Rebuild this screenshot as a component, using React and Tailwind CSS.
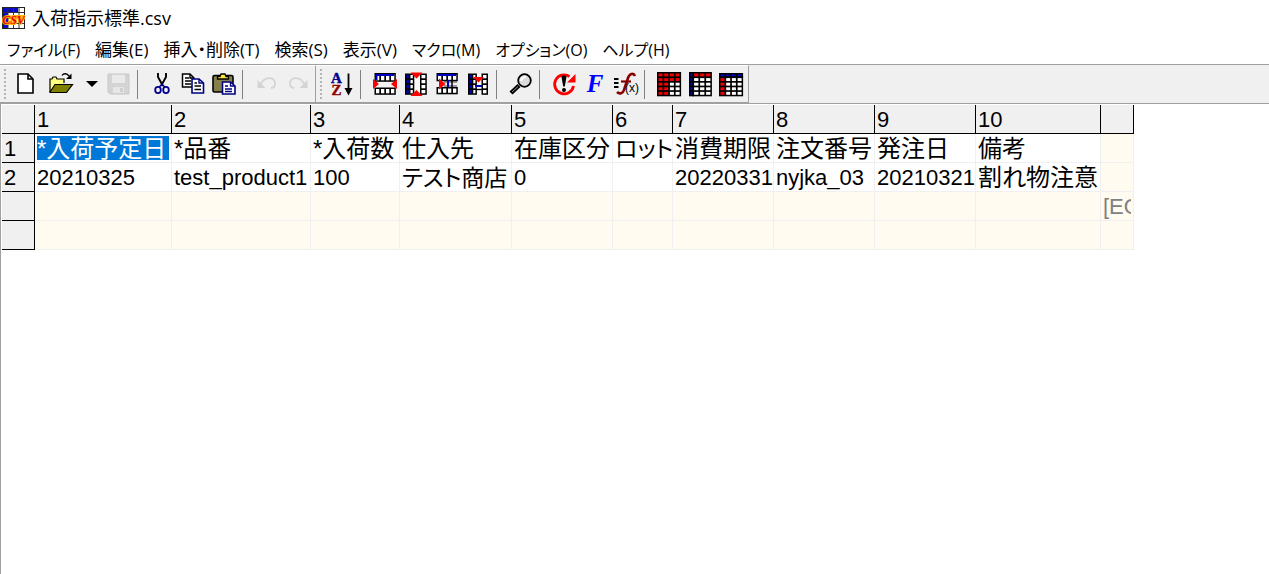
import React from 'react';

const MENUS = [
  { label: 'ファイル(F)', kana: true },
  { label: '編集(E)' },
  { label: '挿入・削除(T)' },
  { label: '検索(S)' },
  { label: '表示(V)' },
  { label: 'マクロ(M)', kana: true },
  { label: 'オプション(O)', kana: true },
  { label: 'ヘルプ(H)', kana: true },
];

const COLUMNS = [
  { id: '1', width: 'w-[137px]', name: '*入荷予定日', value: '20210325' },
  { id: '2', width: 'w-[139px]', name: '*品番', value: 'test_product1' },
  { id: '3', width: 'w-[89px]', name: '*入荷数', value: '100' },
  { id: '4', width: 'w-[112px]', name: '仕入先', value: 'テスト商店' },
  { id: '5', width: 'w-[101px]', name: '在庫区分', value: '0' },
  { id: '6', width: 'w-[60px]', name: 'ロット', value: '' },
  { id: '7', width: 'w-[101px]', name: '消費期限', value: '20220331' },
  { id: '8', width: 'w-[101px]', name: '注文番号', value: 'nyjka_03' },
  { id: '9', width: 'w-[101px]', name: '発注日', value: '20210321' },
  { id: '10', width: 'w-[125px]', name: '備考', value: '割れ物注意' },
];

// latin is set a little smaller than kanji, katakana sits in between
function textSize(text) {
  if (/[ァ-ヶ]/.test(text)) return 'text-[23px]';
  return /[^\x00-\x7f]/.test(text) ? 'text-[24px]' : 'text-[22px]';
}

function Icon({ children }) {
  return (
    <svg width="24" height="24" viewBox="0 0 24 24" fill="none" className="overflow-visible" aria-hidden="true">
      {children}
    </svg>
  );
}

// black block with a cols x rows set of cells, color(col, row) picks the fill
function Cells({ x, y, cols, rows, w, h, color }) {
  const cells = [];
  for (let r = 0; r < rows; r++) {
    for (let c = 0; c < cols; c++) {
      cells.push(
        <rect key={`${r}-${c}`} x={x + 1.5 + c * w} y={y + 1.5 + r * h} width={w - 1.7} height={h - 1.7} fill={color(c, r)} />
      );
    }
  }
  return (
    <g>
      <rect x={x} y={y} width={cols * w + 1.3} height={rows * h + 1.3} fill="#000" />
      {cells}
    </g>
  );
}

const white = () => '#fff';

function AppIcon() {
  return (
    <svg width="23" height="22" viewBox="0 0 23 22" aria-hidden="true">
      <rect width="23" height="22" fill="#fff" />
      <path d="M0 0H16V5H6V22H0Z" fill="#0a0ac8" />
      <path d="M6 0V22M11.5 0V22M17 0V22M0 5.5H23M0 11H23M0 16.5H23" stroke="#333" strokeWidth="1" />
      <rect x="0.5" y="0.5" width="22" height="21" fill="none" stroke="#222" />
      <text x="11.5" y="17" textAnchor="middle" fontFamily="Liberation Serif, serif" fontStyle="italic" fontWeight="bold" fontSize="12" fill="#f00000" stroke="#ffb000" strokeWidth="2" paintOrder="stroke">
        CSV
      </text>
    </svg>
  );
}

function NewIcon() {
  return (
    <Icon>
      <path d="M5 2H15L20 7V21H5Z" fill="#fff" stroke="#000" strokeWidth="1.6" />
      <path d="M15 2V7H20" stroke="#000" strokeWidth="1.6" />
    </Icon>
  );
}

function OpenIcon() {
  return (
    <Icon>
      <path d="M1 20V7H3L4 5H7L8 7H15V11" fill="#ffff80" stroke="#000" strokeWidth="1.2" />
      <path d="M1 20L6 12.5H23.5L17.5 20.5H1Z" fill="#808000" stroke="#000" strokeWidth="1.2" />
      <path d="M13 3.5C14.5 1 18 1 20 4" stroke="#000" strokeWidth="1.4" />
      <path d="M22.5 1.5V7H17Z" fill="#000" />
    </Icon>
  );
}

function SaveIcon() {
  return (
    <Icon>
      <path d="M2 2H23V22H4L2 20Z" fill="#d4d4d4" />
      <path d="M6 2.5H19V11H6Z" fill="#eaeaea" />
      <path d="M7 15H18V21H7Z" fill="#e6e6e6" />
      <path d="M14 16H17V20H14ZM20 3H22V5H20Z" fill="#cfcfcf" />
      <path d="M2 2H23V22H4L2 20Z" stroke="#c8c8c8" />
    </Icon>
  );
}

function CutIcon() {
  return (
    <Icon>
      <path d="M8 1V5L13 14M16 1V5L11 14" stroke="#000" strokeWidth="1.9" />
      <ellipse cx="8" cy="18" rx="2.8" ry="3.2" stroke="#000090" strokeWidth="1.8" />
      <ellipse cx="16" cy="18" rx="2.8" ry="3.2" stroke="#000090" strokeWidth="1.8" />
      <path d="M9 15L12 12.5L15 15" stroke="#000090" strokeWidth="1.6" />
    </Icon>
  );
}

function CopyIcon() {
  return (
    <Icon>
      <path d="M1.5 2H9L13 6V15H1.5Z" fill="#fff" stroke="#000" strokeWidth="1.5" />
      <path d="M4 6H8M4 9H10M4 12H10M9 2V6H13" stroke="#000" strokeWidth="1.4" />
      <path d="M11 7H18L22.5 11V21H11Z" fill="#fff" stroke="#000080" strokeWidth="1.6" />
      <path d="M18 7V11H22" stroke="#000080" strokeWidth="1.4" />
      <path d="M13.5 11H16M13.5 14H20M13.5 17.5H20" stroke="#000" strokeWidth="1.4" />
    </Icon>
  );
}

function PasteIcon() {
  return (
    <Icon>
      <rect x="1" y="3.5" width="20" height="16.5" rx="1.5" fill="#85804a" stroke="#000" strokeWidth="1.6" />
      <path d="M5.5 7V4.5H8L9 2H13L14 4.5H16.5V7Z" fill="#ffe940" stroke="#000" strokeWidth="1.3" />
      <path d="M10.5 10H18.5L23 14V22H10.5Z" fill="#fff" stroke="#000080" strokeWidth="1.6" />
      <path d="M18.5 10V14H23M13 14H16M13 17H20M13 19.5H20" stroke="#000080" strokeWidth="1.3" />
    </Icon>
  );
}

function UndoIcon() {
  return (
    <Icon>
      <path d="M6 12C9 4.5 20 4 20 11.5C20 14.5 18 16 16 16" stroke="#d4d4d4" strokeWidth="1.8" />
      <path d="M2.5 8V16H10.5Z" fill="#d4d4d4" />
    </Icon>
  );
}

function RedoIcon() {
  return (
    <Icon>
      <path d="M18 12C15 4.5 4 4 4 11.5C4 14.5 6 16 8 16" stroke="#d4d4d4" strokeWidth="1.8" />
      <path d="M21.5 8V16H13.5Z" fill="#d4d4d4" />
    </Icon>
  );
}

function SortIcon() {
  return (
    <Icon>
      <g fontFamily="Liberation Serif, serif" fontWeight="bold" fontSize="15" textAnchor="middle" strokeWidth="0.4">
        <text x="6.5" y="11" fill="#000090" stroke="#000090">A</text>
        <text x="6.5" y="23" fill="#900000" stroke="#900000">Z</text>
      </g>
      <path d="M18.5 1.5V18" stroke="#000" strokeWidth="1.8" />
      <path d="M14.5 16H22.5L18.5 23.5Z" fill="#000" />
    </Icon>
  );
}

function InsertRowIcon() {
  return (
    <Icon>
      <path d="M2 8H22V16H2Z" fill="#f4f4f4" />
      <Cells x={1.5} y={1} cols={4} rows={1} w={5} h={7.5} color={white} />
      <path d="M2.5 3H21M3.5 3V8" stroke="#0000c0" strokeWidth="2" />
      <Cells x={1.5} y={15.5} cols={4} rows={1} w={5} h={6} color={white} />
      <path d="M0 7V17L6 12ZM24 7V17L18 12Z" fill="#f00" />
    </Icon>
  );
}

function InsertColumnIcon() {
  return (
    <Icon>
      <path d="M8 2H16V22H8Z" fill="#f8f8f8" />
      <Cells x={1} y={1.5} cols={2} rows={4} w={4} h={5} color={(c) => (c === 0 ? '#0000c0' : '#fff')} />
      <Cells x={16} y={1.5} cols={1} rows={4} w={5.5} h={5} color={white} />
      <path d="M6.5 0.5H18.5L12.5 6.5ZM6.5 24H18.5L12.5 18Z" fill="#f00" />
    </Icon>
  );
}

function DeleteRowIcon() {
  return (
    <Icon>
      <Cells x={1.5} y={1} cols={4} rows={1} w={5} h={7} color={white} />
      <path d="M2.5 3H21" stroke="#0000c0" strokeWidth="2" />
      <path d="M9 10H22M9 14H22" stroke="#444" />
      <path d="M13 8V15" stroke="#0000c0" strokeWidth="2" />
      <path d="M17 8V15" stroke="#000" strokeWidth="1.5" />
      <Cells x={1.5} y={15} cols={4} rows={1} w={5} h={6} color={white} />
      <path d="M4 6.5V17.5L10.5 12Z" fill="#f00" />
    </Icon>
  );
}

function DeleteColumnIcon() {
  return (
    <Icon>
      <path d="M9 2H16V22H9Z" fill="#f8f8f8" />
      <Cells x={2} y={1.5} cols={2} rows={4} w={3.8} h={5} color={(c) => (c === 0 ? '#0000c0' : '#fff')} />
      <Cells x={15.5} y={1.5} cols={1} rows={4} w={5.2} h={5} color={white} />
      <path d="M9 14H16" stroke="#0000c0" strokeWidth="2" />
      <path d="M9 17.5H16" stroke="#000" strokeWidth="1.3" />
      <path d="M7 5H18L12.5 10.5Z" fill="#f00" />
    </Icon>
  );
}

function FindIcon() {
  return (
    <Icon>
      <path d="M2 21L10 13.5" stroke="#000" strokeWidth="4.4" />
      <path d="M3 20L9 14.5" stroke="#999" strokeWidth="1" />
      <circle cx="15.5" cy="8.5" r="6.3" fill="#dcdcdc" stroke="#000" strokeWidth="1.8" />
      <path d="M12 9C12.5 6 14 5 17 5" stroke="#fff" strokeWidth="2.2" />
    </Icon>
  );
}

function ReloadIcon() {
  return (
    <Icon>
      <path d="M17.5 4.5A9.5 9.5 0 1 0 21.5 14" stroke="#f00" strokeWidth="2.8" />
      <path d="M23.5 2V10.5H15Z" fill="#f00" />
      <path d="M9.5 5C9.5 3 14.5 3 14.5 5L12.8 14.5H11.2Z" fill="#000" />
      <circle cx="12" cy="18" r="2" fill="#000" />
    </Icon>
  );
}

function FontIcon() {
  return (
    <Icon>
      <text x="12" y="19.5" textAnchor="middle" fontFamily="Liberation Serif, serif" fontStyle="italic" fontWeight="bold" fontSize="25" fill="#00f">
        F
      </text>
    </Icon>
  );
}

function FunctionIcon() {
  return (
    <Icon>
      <path d="M0 7H4.5M0 11H4.5M0 15H4.5" stroke="#000" strokeWidth="2.2" />
      <path d="M21 4C19.5 0.5 15.5 1.5 14 6L10 18C9 21.5 5.5 22.5 3 20" stroke="#880000" strokeWidth="2.6" />
      <path d="M7 9.5H17" stroke="#880000" strokeWidth="2.2" />
      <text x="18" y="20" textAnchor="middle" fontFamily="Liberation Sans, sans-serif" fontSize="12" fill="#000">
        (x)
      </text>
    </Icon>
  );
}

function HeadersIcon() {
  return (
    <Icon>
      <Cells x={0} y={0} cols={4} rows={5} w={5.7} h={4.6} color={(c, r) => (c < 2 || r < 2 ? '#f00000' : '#fff')} />
    </Icon>
  );
}

function TopHeaderIcon() {
  return (
    <Icon>
      <Cells x={1} y={0} cols={1} rows={5} w={3.6} h={4.6} color={() => '#0000c8'} />
      <Cells x={4.6} y={0} cols={3} rows={5} w={6} h={4.6} color={(c, r) => (r === 0 ? '#f00000' : '#fff')} />
    </Icon>
  );
}

function SideHeaderIcon() {
  return (
    <Icon>
      <Cells x={0} y={1} cols={4} rows={1} w={5.7} h={3.6} color={() => '#0000c8'} />
      <Cells x={0} y={4.6} cols={4} rows={4} w={5.7} h={4.6} color={(c) => (c === 0 ? '#f00000' : '#fff')} />
    </Icon>
  );
}

function ToolButton({ label, disabled, className = 'w-[31px]', children }) {
  return (
    <button type="button" aria-label={label} disabled={disabled} className={`flex h-full shrink-0 items-center justify-center ${className}`}>
      {children}
    </button>
  );
}

function Separator() {
  return <div className="ml-[3px] mr-2 h-[29px] w-px shrink-0 bg-[#808080]" />;
}

function Grip({ className }) {
  return (
    <svg width="3" height="31" viewBox="0 0 3 31" className={`shrink-0 ${className}`} aria-hidden="true">
      <path d="M1 0V31" stroke="#b4b4b4" strokeWidth="2" strokeDasharray="2 2" />
    </svg>
  );
}

const band = 'flex items-center border-b border-r border-t border-b-[#a0a0a0] border-r-[#a0a0a0] border-t-white pr-[2px]';

function Toolbar() {
  return (
    <div className="flex h-10 border-y border-[#a0a0a0] bg-[#f0f0f0]">
      <div className={band}>
        <Grip className="ml-1 mr-[2px]" />
        <ToolButton label="新規作成"><NewIcon /></ToolButton>
        <ToolButton label="開く" className="w-[42px]"><OpenIcon /></ToolButton>
        <ToolButton label="最近使ったファイル" className="w-5">
          <svg width="12" height="6" viewBox="0 0 12 6" aria-hidden="true">
            <path d="M0 0H12L6 6Z" fill="#000" />
          </svg>
        </ToolButton>
        <ToolButton label="上書き保存" className="w-8" disabled><SaveIcon /></ToolButton>
        <Separator />
        <ToolButton label="切り取り"><CutIcon /></ToolButton>
        <ToolButton label="コピー"><CopyIcon /></ToolButton>
        <ToolButton label="貼り付け"><PasteIcon /></ToolButton>
        <Separator />
        <ToolButton label="元に戻す" disabled><UndoIcon /></ToolButton>
        <ToolButton label="やり直し" disabled><RedoIcon /></ToolButton>
      </div>
      <div className={band}>
        <Grip className="ml-1 mr-[3px]" />
        <ToolButton label="並べ替え"><SortIcon /></ToolButton>
        <Separator />
        <ToolButton label="行の挿入"><InsertRowIcon /></ToolButton>
        <ToolButton label="列の挿入"><InsertColumnIcon /></ToolButton>
        <ToolButton label="行の削除"><DeleteRowIcon /></ToolButton>
        <ToolButton label="列の削除"><DeleteColumnIcon /></ToolButton>
        <Separator />
        <ToolButton label="検索"><FindIcon /></ToolButton>
        <Separator />
        <ToolButton label="再読み込み"><ReloadIcon /></ToolButton>
        <ToolButton label="フォント"><FontIcon /></ToolButton>
        <ToolButton label="関数"><FunctionIcon /></ToolButton>
        <Separator />
        <ToolButton label="見出し"><HeadersIcon /></ToolButton>
        <ToolButton label="先頭行"><TopHeaderIcon /></ToolButton>
        <ToolButton label="先頭列"><SideHeaderIcon /></ToolButton>
      </div>
    </div>
  );
}

const head = 'h-[29px] overflow-hidden whitespace-nowrap border-b border-r border-black bg-[#f0f0f0] p-0 pl-[2px] pt-[2px] text-left align-top text-[22px] leading-[26px] font-normal';
const cell = 'h-[29px] overflow-hidden whitespace-nowrap border-b border-r border-[#f0f0f0] p-0 pl-[2px] pt-[2px] align-top leading-[26px]';

function Sheet() {
  return (
    <table className="w-0 table-fixed border-separate border-spacing-0 font-['Liberation_Sans','Noto_Sans_CJK_JP',sans-serif] text-black [font-feature-settings:'palt']">
      <colgroup>
        <col className="w-[33px]" />
        {COLUMNS.map((c) => <col key={c.id} className={c.width} />)}
        <col className="w-[33px]" />
      </colgroup>
      <thead>
        <tr>
          <td className={head} />
          {COLUMNS.map((c) => <th key={c.id} scope="col" className={head}>{c.id}</th>)}
          <td className={head} />
        </tr>
      </thead>
      <tbody>
        <tr>
          <th scope="row" className={head}>1</th>
          {COLUMNS.map((c, i) => (
            <td key={c.id} className={`${cell} ${textSize(c.name)}`}>
              {i === 0 ? (
                <span className="mr-[2px] block h-6 bg-[#0078d7] text-white">{c.name}</span>
              ) : (
                c.name
              )}
            </td>
          ))}
          <td className={`${cell} bg-[#fffbf0]`} />
        </tr>
        <tr>
          <th scope="row" className={head}>2</th>
          {COLUMNS.map((c) => (
            <td key={c.id} className={`${cell} ${textSize(c.value)}`}>{c.value}</td>
          ))}
          <td className={`${cell} bg-[#fffbf0]`} />
        </tr>
        <tr>
          <th className={head} />
          {COLUMNS.map((c) => <td key={c.id} className={`${cell} bg-[#fffbf0]`} />)}
          <td className={`${cell} bg-[#fffbf0] text-[22px] text-[#808080]`}>
            <span className="mr-[2px] block overflow-hidden">[EOF]</span>
          </td>
        </tr>
        <tr>
          <th className={head} />
          {COLUMNS.map((c) => <td key={c.id} className={`${cell} bg-[#fffbf0]`} />)}
          <td className={`${cell} bg-[#fffbf0]`} />
        </tr>
      </tbody>
    </table>
  );
}

export default function App() {
  return (
    <div className="flex min-h-screen flex-col bg-white font-['Open_Sans','Noto_Sans_CJK_JP',sans-serif] text-black">
      <header className="flex h-[35px] items-center gap-[7px] pl-[2px]">
        <AppIcon />
        <h1 className="text-[18px] leading-6">入荷指示標準.csv</h1>
      </header>
      <nav className="flex h-[29px] items-center gap-[15px] pl-[7px] leading-6 [font-feature-settings:'palt']">
        {MENUS.map((m) => (
          <button key={m.label} type="button" className={`whitespace-nowrap ${m.kana ? 'text-[16px]' : 'text-[17px]'}`}>
            {m.label}
          </button>
        ))}
      </nav>
      <Toolbar />
      <main className="flex-1 overflow-hidden border-l border-[#a0a0a0] pl-px pt-px">
        <Sheet />
      </main>
    </div>
  );
}
